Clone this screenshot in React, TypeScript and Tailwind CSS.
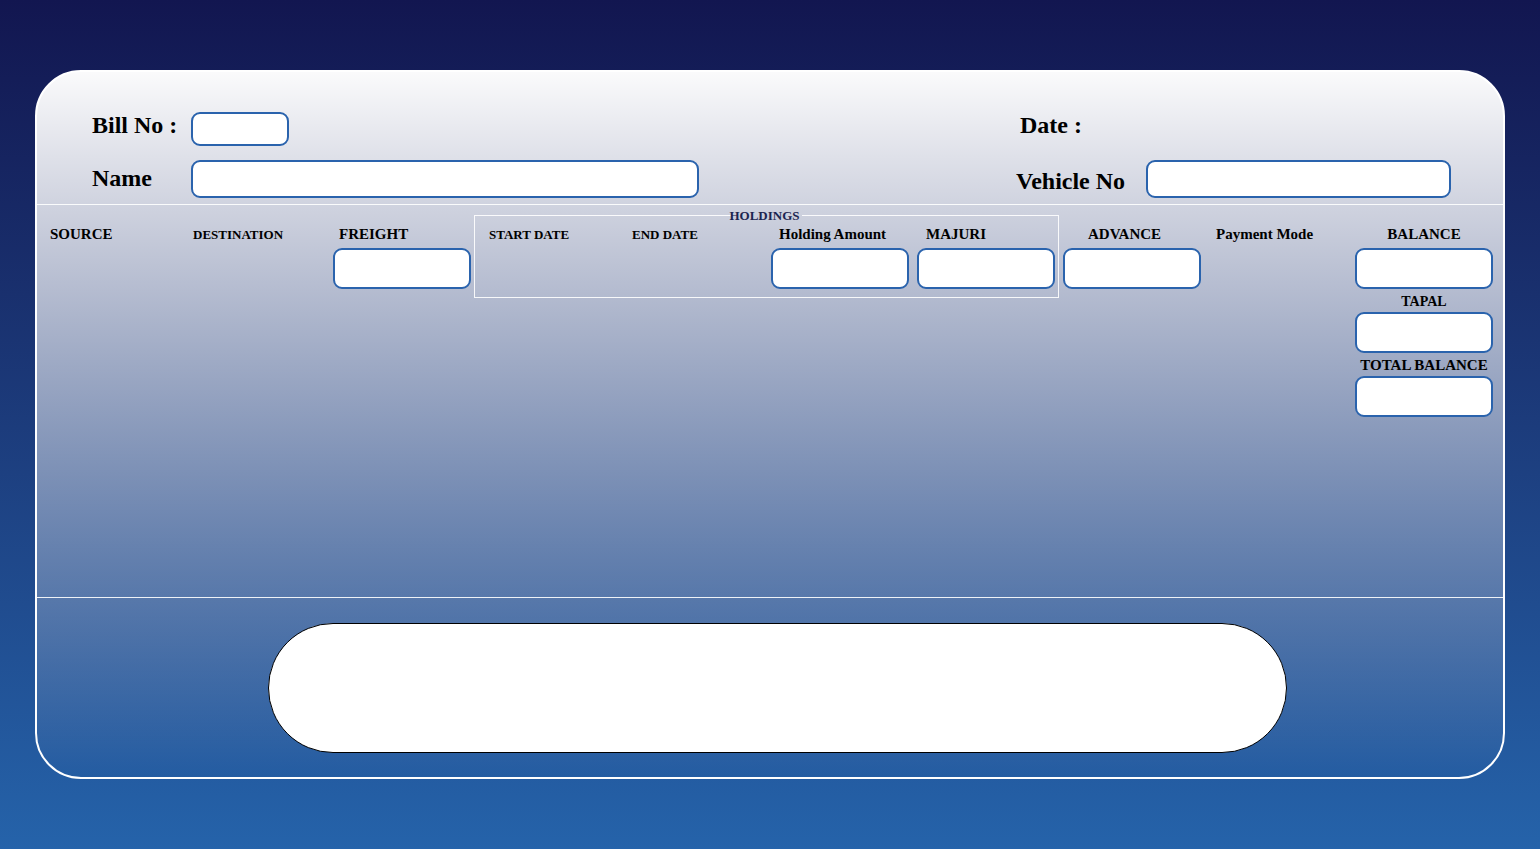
import React from 'react'

function Box({ className = '' }: { className?: string }): JSX.Element {
  return <input className={`block bg-white border-2 border-[#2a63ad] rounded-[9px] outline-none ${className}`} />
}

export default function App(): JSX.Element {
  return (
    <div className="h-screen w-full overflow-hidden bg-linear-to-b from-[#121650] to-[#2563aa] pt-[70px] font-['Liberation_Serif',serif] font-bold text-black">
      <div className="ml-[35px] w-[1470px] h-[709px] rounded-[46px] border-2 border-white bg-[linear-gradient(to_bottom,rgba(255,255,255,0.98),rgba(255,255,255,0))] overflow-hidden">
        {/* Header */}
        <div className="h-[133px] pt-[40px] pl-[55px] border-b border-white/90">
          <div className="flex items-center h-[33px]">
            <label className="w-[99px] text-[24px] leading-none mb-[7px]">Bill No :</label>
            <Box className="w-[98px] h-[34px] rounded-[8px]" />
            <label className="ml-[731px] text-[24px] leading-none mb-[7px]">Date :</label>
          </div>
          <div className="flex items-center mt-[15px] h-[38px]">
            <label className="w-[99px] text-[24px] leading-none mb-[2px]">Name</label>
            <Box className="w-[508px] h-[38px]" />
            <label className="ml-[317px] w-[130px] text-[24px] leading-none pt-[4px]">Vehicle No</label>
            <Box className="w-[305px] h-[38px]" />
          </div>
        </div>

        {/* Entry row */}
        <div className="h-[393px] pl-[13px] flex items-start border-b border-white/90">
          <div className="w-[143px] pt-[21px] text-[15px] leading-[17px]">SOURCE</div>
          <div className="w-[140px] pt-[21px] text-[13px] leading-[17px]">DESTINATION</div>
          <div className="w-[141px] pt-[21px]">
            <div className="pl-[6px] text-[15px] leading-[17px]">FREIGHT</div>
            <Box className="mt-[5px] w-[138px] h-[41px]" />
          </div>

          <fieldset className="mt-[4px] w-[585px] border border-white/90 pb-[8px]">
            <legend className="mx-auto px-0 text-[13px] leading-[13px] text-[#1b2550] -translate-x-[2px]">HOLDINGS</legend>
            <div className="flex items-start pt-[4px]">
              <div className="w-[157px] pl-[14px] text-[13px] leading-[17px]">START DATE</div>
              <div className="w-[139px] text-[13px] leading-[17px]">END DATE</div>
              <div className="w-[146px]">
                <div className="pl-[8px] text-[15px] leading-[17px]">Holding Amount</div>
                <Box className="mt-[5px] w-[138px] h-[41px]" />
              </div>
              <div>
                <div className="pl-[9px] text-[15px] leading-[17px]">MAJURI</div>
                <Box className="mt-[5px] w-[138px] h-[41px]" />
              </div>
            </div>
          </fieldset>

          <div className="ml-[4px] w-[138px] pt-[21px]">
            <div className="pl-[25px] text-[15px] leading-[17px]">ADVANCE</div>
            <Box className="mt-[5px] w-[138px] h-[41px]" />
          </div>
          <div className="ml-[15px] w-[139px] pt-[21px] text-[15px] leading-[17px]">Payment Mode</div>
          <div className="w-[138px] pt-[21px] text-center">
            <div className="text-[15px] leading-[17px]">BALANCE</div>
            <Box className="mt-[5px] w-[138px] h-[41px]" />
            <div className="h-[23px] flex items-center justify-center text-[14px] leading-none pt-[2px]">TAPAL</div>
            <Box className="w-[138px] h-[41px]" />
            <div className="h-[23px] flex items-center justify-center text-[15px] leading-none pt-[2px]">TOTAL BALANCE</div>
            <Box className="w-[138px] h-[41px]" />
          </div>
        </div>

        {/* Footer */}
        <div className="pt-[25px]">
          <button className="block ml-[231px] w-[1019px] h-[130px] rounded-full bg-white border border-black"></button>
        </div>
      </div>
    </div>
  )
}
